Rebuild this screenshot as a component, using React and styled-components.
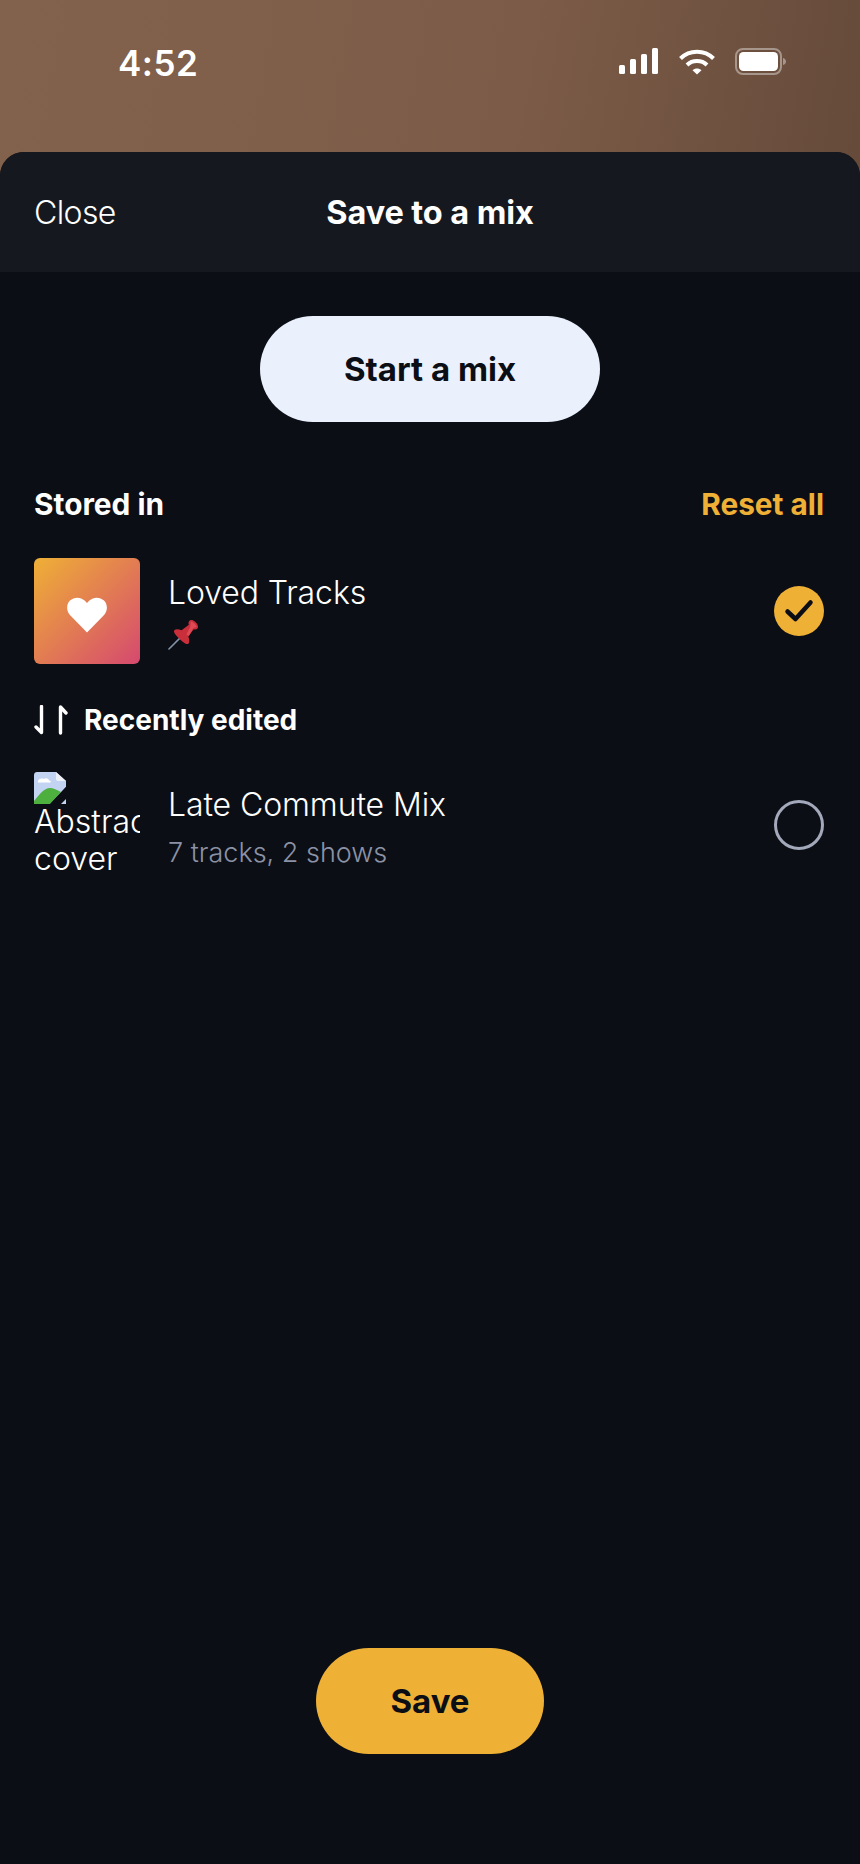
import styled, { createGlobalStyle } from 'styled-components';

const GlobalStyle = createGlobalStyle`
  html, body {
    margin: 0;
    padding: 0;
    background: #0b0e15;
  }
  * { box-sizing: border-box; }
`;

const Page = styled.div`
  width: 860px;
  height: 1864px;
  display: flex;
  flex-direction: column;
  font-family: Inter, 'Liberation Sans', sans-serif;
  color: #fff;
  background: linear-gradient(100deg, #83624d 0%, #7c5c48 45%, #533b2e 100%);
  overflow: hidden;
`;

const StatusBar = styled.div`
  height: 152px;
  display: flex;
  justify-content: space-between;
  align-items: flex-start;
  padding: 43px 74px 0 118px;
`;

const Clock = styled.span`
  font-size: 35px;
  line-height: 40px;
  font-weight: 600;
  letter-spacing: 0.5px;
`;

const StatusIcons = styled.div`
  display: flex;
  align-items: center;
  gap: 20px;
  padding-top: 5px;
`;

const Sheet = styled.div`
  flex: 1;
  display: flex;
  flex-direction: column;
  background: #0b0e15;
  border-radius: 24px 24px 0 0;
  overflow: hidden;
`;

const SheetHeader = styled.header`
  height: 120px;
  flex: none;
  position: relative;
  display: flex;
  align-items: center;
  justify-content: center;
  background: #15191f;
`;

const CloseLabel = styled.span`
  position: absolute;
  left: 34px;
  top: 41px;
  font-size: 32px;
  line-height: 40px;
  font-weight: 300;
  letter-spacing: -0.6px;
`;

const Title = styled.h1`
  margin: 2px 0 0;
  font-size: 32.5px;
  line-height: 42px;
  font-weight: 700;
  letter-spacing: -0.1px;
`;

const Body = styled.main`
  flex: 1;
  display: flex;
  flex-direction: column;
  padding: 44px 36px 110px 34px;
`;

const PillButton = styled.button`
  align-self: center;
  flex: none;
  width: ${props => props.$width}px;
  height: 106px;
  margin-left: 2px;
  border: 0;
  border-radius: 53px;
  background: ${props => props.$bg};
  color: #0b0e15;
  font-family: inherit;
  font-size: 33px;
  font-weight: 700;
`;

const SectionRow = styled.div`
  display: flex;
  justify-content: space-between;
  align-items: center;
  height: 40px;
  margin-top: 62px;
`;

const SectionTitle = styled.span`
  font-size: 29.8px;
  line-height: 40px;
  font-weight: 700;
`;

const ResetLabel = styled(SectionTitle)`
  color: #efb036;
`;

const TrackRow = styled.div`
  display: flex;
  align-items: center;
  height: 106px;
  margin-top: ${props => props.$top}px;
`;

const HeartTile = styled.div`
  width: 106px;
  height: 106px;
  flex: none;
  display: flex;
  align-items: center;
  justify-content: center;
  padding-top: 7px;
  border-radius: 6px;
  background: linear-gradient(135deg, #efb036 0%, #d5496f 100%);
`;

const BrokenCover = styled.div`
  width: 106px;
  height: 106px;
  flex: none;
  overflow: hidden;
  font-size: 32px;
  line-height: 36.5px;
  font-weight: 300;
`;

const BrokenIcon = styled.svg`
  display: block;
  width: 32px;
  height: 32px;
`;

const AltText = styled.div`
  width: 140px;
`;

const TrackText = styled.div`
  flex: 1;
  display: flex;
  flex-direction: column;
  padding-left: 28px;
  padding-top: ${props => props.$shift || 0}px;
`;

const TrackName = styled.span`
  font-size: 32px;
  line-height: 40px;
  font-weight: 300;
  letter-spacing: -0.1px;
`;

const TrackMeta = styled.span`
  margin-top: 11px;
  font-size: 27px;
  line-height: 34px;
  font-weight: 300;
  color: #8b92a5;
`;

const PinIcon = styled.svg`
  display: block;
  width: 31px;
  height: 31px;
  margin-top: 6px;
`;

const CheckedDot = styled.div`
  width: 50px;
  height: 50px;
  flex: none;
  display: flex;
  align-items: center;
  justify-content: center;
  border-radius: 50%;
  background: #efb036;
`;

const EmptyDot = styled.div`
  width: 50px;
  height: 50px;
  flex: none;
  border-radius: 50%;
  border: 3px solid #a3a8ba;
`;

const SortRow = styled.div`
  display: flex;
  align-items: center;
  gap: 16px;
  height: 40px;
  margin-top: 36px;
`;

const SortTitle = styled.span`
  font-size: 28px;
  line-height: 40px;
  font-weight: 700;
`;

const Spacer = styled.div`
  flex: 1;
`;

function SignalIcon() {
  return (
    <svg width="40" height="27" viewBox="0 0 40 27" fill="#fff">
      <rect x="0" y="17" width="6" height="9" rx="1.5" />
      <rect x="11" y="11" width="6" height="15" rx="1.5" />
      <rect x="22" y="6" width="6" height="20" rx="1.5" />
      <rect x="33" y="0" width="6" height="26" rx="1.5" />
    </svg>
  );
}

function WifiIcon() {
  return (
    <svg width="36" height="26" viewBox="0 0 36 26" fill="none" stroke="#fff" strokeWidth="4" strokeLinecap="butt">
      <path d="M1.5 9.5C10.5 0.5 25.5 0.5 34.5 9.5" />
      <path d="M8 16C13.5 10.8 22.5 10.8 28 16" />
      <path d="M13.5 21.2L18 25.6L22.5 21.2C19.9 18.9 16.1 18.9 13.5 21.2Z" fill="#fff" stroke="none" />
    </svg>
  );
}

function BatteryIcon() {
  return (
    <svg width="51" height="27" viewBox="0 0 51 27" fill="none">
      <rect x="1" y="1" width="45" height="25" rx="7" stroke="#fff" strokeOpacity="0.4" strokeWidth="2" />
      <rect x="4" y="4" width="39" height="19" rx="4.5" fill="#fff" />
      <path d="M48 10C50 10.5 51 12 51 13.5C51 15 50 16.5 48 17Z" fill="#fff" fillOpacity="0.4" />
    </svg>
  );
}

function HeartIcon() {
  return (
    <svg width="40" height="36" viewBox="0 0 40 36" fill="#fff">
      <path d="M20 35.5L3.4 18.6C-0.9 14.2-0.9 7.6 3 3.6C7 -0.3 13.6 -0.3 17.6 3.6L20 6.1L22.4 3.6C26.4 -0.3 33 -0.3 37 3.6C40.9 7.6 40.9 14.2 36.6 18.6Z" />
    </svg>
  );
}

function CheckIcon() {
  return (
    <svg width="30" height="24" viewBox="0 0 30 24" fill="none" stroke="#0b0e15" strokeWidth="4.5" strokeLinecap="round" strokeLinejoin="round">
      <path d="M3.5 12.5L11.5 20L26.5 3.5" />
    </svg>
  );
}

function SortIcon() {
  return (
    <svg width="34" height="30" viewBox="0 0 34 30" fill="none" stroke="#fff" strokeWidth="3.4" strokeLinecap="round" strokeLinejoin="round">
      <path d="M7.5 1.5V27.5L2 22" />
      <path d="M26.5 28V2L32 8" />
    </svg>
  );
}

function PinGlyph() {
  return (
    <PinIcon viewBox="0 0 32 32">
      <path d="M1 31L13 19" stroke="#8494a8" strokeWidth="1.6" strokeLinecap="round" />
      <path d="M6.5 11.5C8 10 11 10.5 14 11.5L21.5 6C20.5 3 22 0.5 25 1C28 2 31 5.5 31 8C31 10.5 28.5 11.5 26.5 10.5L21 18C22 21 22.5 24 21 25.5C19.5 27 15.5 24 11.5 20C8 16.5 5 13 6.5 11.5Z" fill="#c92f3b" />
      <path d="M23.5 2.5C26 3 29 6 29.5 8L26 9.5L21.5 17.5L19 16L23 8Z" fill="#dd4a55" />
    </PinIcon>
  );
}

function BrokenImageGlyph() {
  return (
    <BrokenIcon viewBox="0 0 32 32">
      <path d="M0 3C0 1.3 1.3 0 3 0H22L32 9V15L16 32H0Z" fill="#c2d4f2" />
      <path d="M22 0L32 9H24C22.9 9 22 8.1 22 7Z" fill="#eef1f5" />
      <path d="M4 9C5 6.5 8 6 9.5 7C11.5 5.5 14.5 6 15 8.5C17 8.5 17.5 10.5 16 10.5H5C4 10.5 3.5 10 4 9Z" fill="#fff" />
      <path d="M0 32V29C5 23 10 16 16 16C19 16 23 18 27 20L16 32Z" fill="#4caf3e" />
      <path d="M16 32L32 15V21L22 32Z" fill="#0b0e15" />
      <path d="M27 32L32 27V32Z" fill="#c2d4f2" />
    </BrokenIcon>
  );
}

export default function App() {
  return (
    <Page>
      <GlobalStyle />
      <StatusBar>
        <Clock>4:52</Clock>
        <StatusIcons>
          <SignalIcon />
          <WifiIcon />
          <BatteryIcon />
        </StatusIcons>
      </StatusBar>
      <Sheet>
        <SheetHeader>
          <CloseLabel>Close</CloseLabel>
          <Title>Save to a mix</Title>
        </SheetHeader>
        <Body>
          <PillButton $width={340} $bg="#ebf1fc">Start a mix</PillButton>
          <SectionRow>
            <SectionTitle>Stored in</SectionTitle>
            <ResetLabel>Reset all</ResetLabel>
          </SectionRow>
          <TrackRow $top={34}>
            <HeartTile><HeartIcon /></HeartTile>
            <TrackText>
              <TrackName>Loved Tracks</TrackName>
              <PinGlyph />
            </TrackText>
            <CheckedDot><CheckIcon /></CheckedDot>
          </TrackRow>
          <SortRow>
            <SortIcon />
            <SortTitle>Recently edited</SortTitle>
          </SortRow>
          <TrackRow $top={32}>
            <BrokenCover>
              <BrokenImageGlyph />
              <AltText>Abstract cover</AltText>
            </BrokenCover>
            <TrackText $shift={4}>
              <TrackName>Late Commute Mix</TrackName>
              <TrackMeta>7 tracks, 2 shows</TrackMeta>
            </TrackText>
            <EmptyDot />
          </TrackRow>
          <Spacer />
          <PillButton $width={228} $bg="#efb036">Save</PillButton>
        </Body>
      </Sheet>
    </Page>
  );
}
